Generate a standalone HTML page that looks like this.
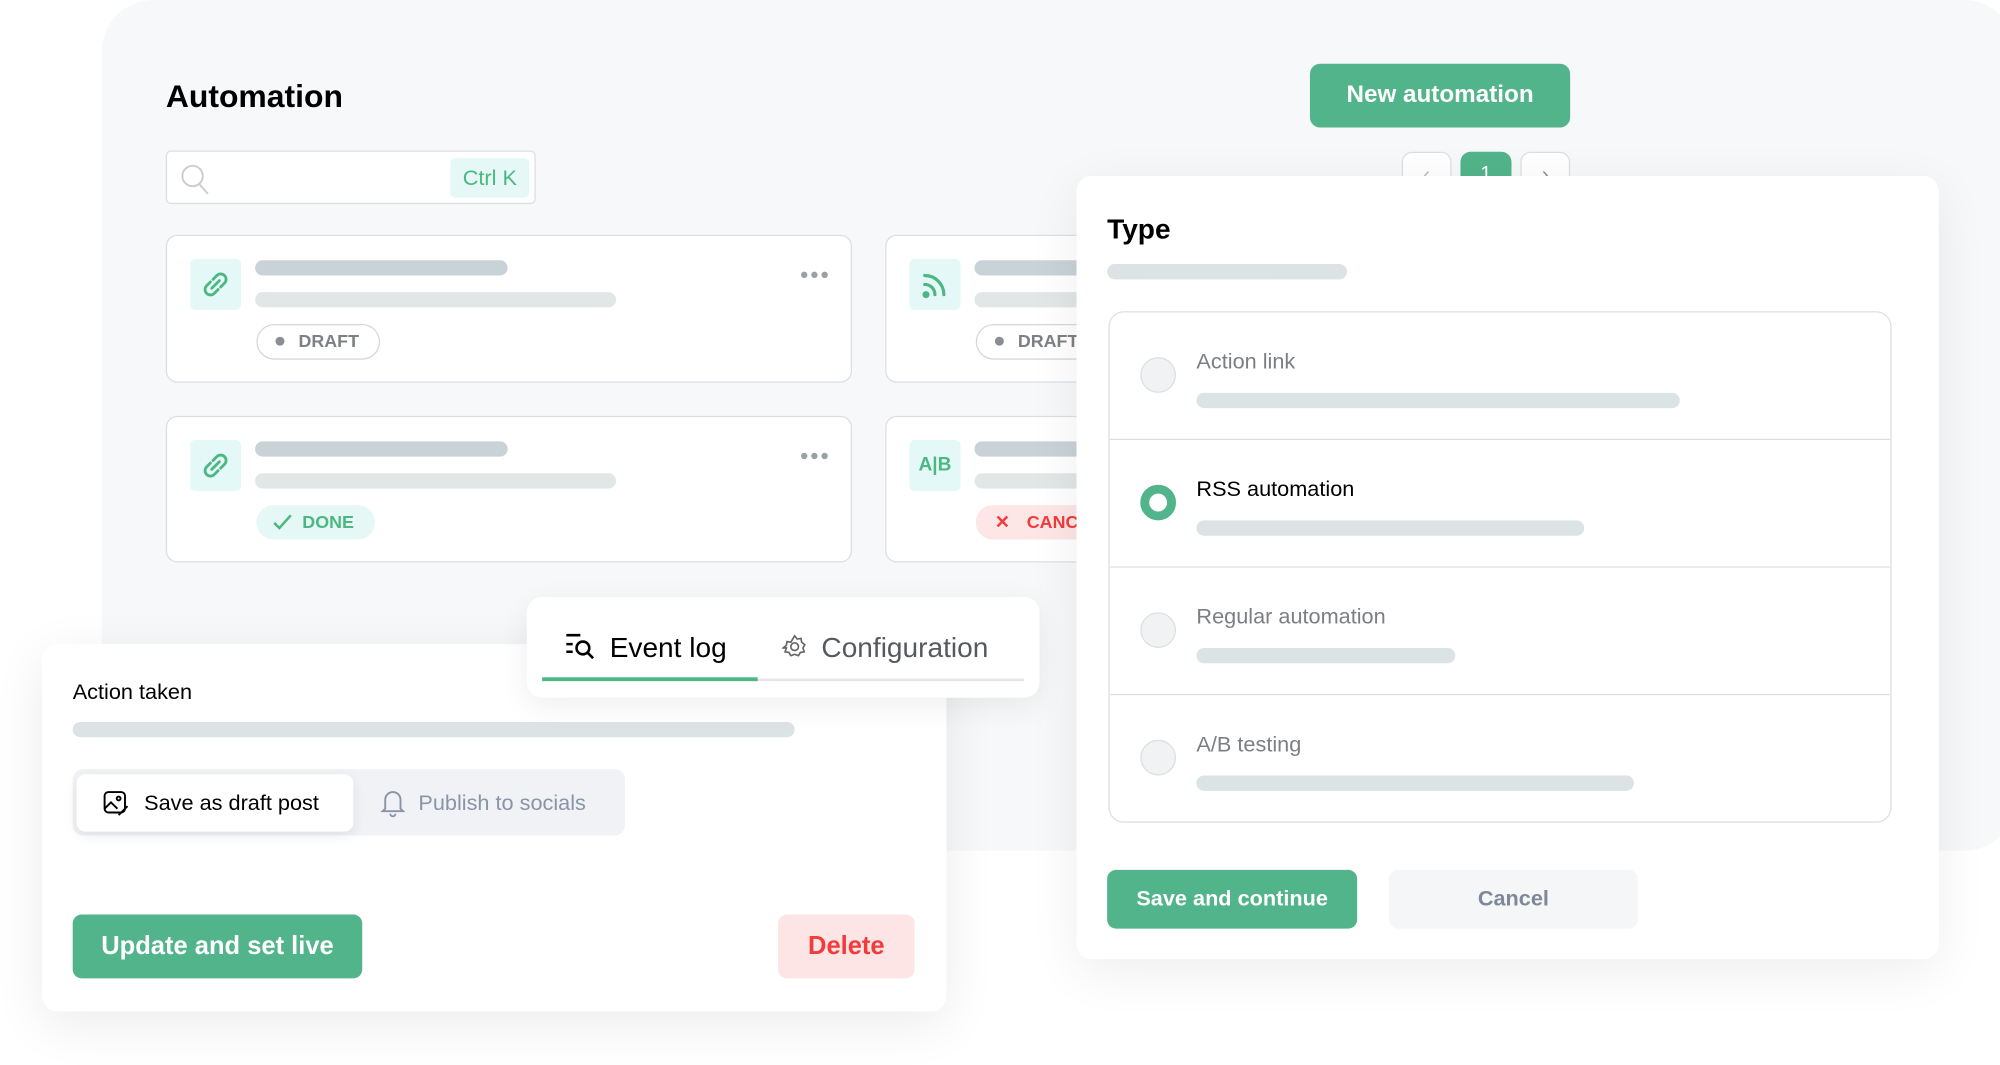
<!DOCTYPE html>
<html><head><meta charset="utf-8"><style>
*{box-sizing:border-box;margin:0;padding:0}
html,body{width:2000px;height:1065px;overflow:hidden;background:#fff;font-family:"Liberation Sans",sans-serif}
#w{position:absolute;left:0;top:0;width:1568px;height:835px;transform:scale(1.27551);transform-origin:0 0}
.a{position:absolute}
.bar{position:absolute;border-radius:7px;height:12px}
.card{position:absolute;background:#fff;border:1.5px solid #dcdfe2;border-radius:9px}
.ic{position:absolute;left:18px;top:18px;width:40px;height:40px;background:#e5f8f8;border-radius:4px}
.dots{position:absolute;left:497px;top:25px;color:#a0a4a8;font-size:10px;letter-spacing:1px}
.dots i{display:inline-block;width:5px;height:5px;border-radius:50%;background:#9aa0a6;margin-right:3px}
.radio{position:absolute;left:24px;width:28px;height:28px;border-radius:50%;background:#f1f2f3;border:1.5px solid #dcdfe1}
.row{position:absolute;left:0;width:100%;height:100px;border-bottom:1.5px solid #dcdfe2}
.row .t{position:absolute;left:68px;top:29px;font-size:17px;color:#7b7f84}
.row .bar{left:68px;top:63px;background:#dce3e4}
</style></head><body><div id="w">
<div class="a" style="left:80px;top:0;width:1500px;height:667px;background:#f7f8fa;border-radius:40px"></div>
<div class="a" style="left:130px;top:62px;font-size:25px;font-weight:bold;color:#000">Automation</div>
<div class="a" style="left:130px;top:118px;width:290px;height:42px;background:#fff;border:1.5px solid #dcdfe2;border-radius:4px">
<svg class="a" style="left:10px;top:9px" width="26" height="26" viewBox="0 0 26 26" fill="none" stroke="#ccc" stroke-width="1.5"><circle cx="10" cy="10" r="8"/><path d="M15 16l7 8"/></svg>
<div class="a" style="left:222px;top:5px;width:62px;height:31px;background:#e5f8f6;border-radius:4px;color:#4cb782;font-size:17px;text-align:center;line-height:31px">Ctrl K</div></div>

<div class="card" style="left:130px;top:184px;width:538px;height:116px">
<div class="ic"><svg width="40" height="40" viewBox="0 0 40 40" fill="none" stroke="#4cb782" stroke-width="2.2" stroke-linecap="round"><path d="M18 16l3-3a4 4 0 016 6l-3 3M22 24l-3 3a4 4 0 01-6-6l3-3M17 23l6-6"/></svg></div>
<div class="bar" style="left:69px;top:19px;width:198px;background:#c9d3d7"></div>
<div class="bar" style="left:69px;top:44px;width:283px;background:#e1e6e6"></div>
<div class="a" style="left:70px;top:69px;width:97px;height:28px;border:1.5px solid #d5d8da;border-radius:14px;font-size:14px;font-weight:bold;color:#7d8185;line-height:25px;padding-left:32px">DRAFT<i class="a" style="left:14px;top:9px;width:7px;height:7px;border-radius:50%;background:#8a8e92"></i></div>
<div class="dots"><i></i><i></i><i></i></div></div>

<div class="card" style="left:130px;top:326px;width:538px;height:115px">
<div class="ic"><svg width="40" height="40" viewBox="0 0 40 40" fill="none" stroke="#4cb782" stroke-width="2.2" stroke-linecap="round"><path d="M18 16l3-3a4 4 0 016 6l-3 3M22 24l-3 3a4 4 0 01-6-6l3-3M17 23l6-6"/></svg></div>
<div class="bar" style="left:69px;top:19px;width:198px;background:#c9d3d7"></div>
<div class="bar" style="left:69px;top:44px;width:283px;background:#e1e6e6"></div>
<div class="a" style="left:70px;top:69px;width:93px;height:27px;background:#e5f8f6;border-radius:14px;font-size:14px;font-weight:bold;color:#4cb782;line-height:27px;padding-left:36px">DONE<svg class="a" style="left:13px;top:7px" width="15" height="13" viewBox="0 0 15 13" fill="none" stroke="#4cb782" stroke-width="2"><path d="M1 7l4 4 9-10"/></svg></div>
<div class="dots"><i></i><i></i><i></i></div></div>

<div class="card" style="left:694px;top:184px;width:400px;height:116px">
<div class="ic"><svg width="40" height="40" viewBox="0 0 40 40" fill="none" stroke="#4cb782" stroke-width="2.5" stroke-linecap="round"><path d="M12 13a15 15 0 0115 15M12 20a8 8 0 018 8"/><circle cx="13" cy="28" r="1.5" fill="#4cb782"/></svg></div>
<div class="bar" style="left:69px;top:19px;width:198px;background:#c9d3d7"></div>
<div class="bar" style="left:69px;top:44px;width:283px;background:#e1e6e6"></div>
<div class="a" style="left:70px;top:69px;width:97px;height:28px;border:1.5px solid #d5d8da;border-radius:14px;font-size:14px;font-weight:bold;color:#7d8185;line-height:25px;padding-left:32px">DRAFT<i class="a" style="left:14px;top:9px;width:7px;height:7px;border-radius:50%;background:#8a8e92"></i></div></div>
<div class="card" style="left:694px;top:326px;width:400px;height:115px">
<div class="ic" style="color:#4cb782;font-weight:bold;font-size:15px;text-align:center;line-height:40px">A|B</div>
<div class="bar" style="left:69px;top:19px;width:198px;background:#c9d3d7"></div>
<div class="bar" style="left:69px;top:44px;width:283px;background:#e1e6e6"></div>
<div class="a" style="left:70px;top:69px;width:120px;height:27px;background:#fde6e6;border-radius:14px;font-size:14px;font-weight:bold;color:#f23b3b;line-height:27px;padding-left:40px">CANCELLED<span class="a" style="left:15px;top:0">✕</span></div></div>

<div class="a" style="left:1027px;top:50px;width:204px;height:50px;background:#52b48a;border-radius:8px;color:#fff;font-weight:bold;font-size:19px;text-align:center;line-height:50px">New automation</div>
<div class="a" style="left:1099px;top:119px;width:39px;height:40px;border:1.5px solid #dcdfe2;border-radius:8px;background:#fff;color:#bbb;text-align:center;line-height:36px;font-size:16px">‹</div>
<div class="a" style="left:1145px;top:119px;width:40px;height:40px;border-radius:8px;background:#52b48a;color:#fff;text-align:center;line-height:36px;font-size:16px">1</div>
<div class="a" style="left:1192px;top:119px;width:39px;height:40px;border:1.5px solid #dcdfe2;border-radius:8px;background:#fff;color:#888;text-align:center;line-height:36px;font-size:16px">›</div>

<div class="a" style="left:844px;top:138px;width:676px;height:614px;background:#fff;border-radius:12px;box-shadow:0 10px 40px rgba(0,0,0,.07)">
<div class="a" style="left:24px;top:29px;font-size:22px;font-weight:bold;color:#000">Type</div>
<div class="bar" style="left:24px;top:69px;width:188px;background:#dce3e4"></div>
<div class="a" style="left:25px;top:106px;width:614px;height:401px;border:1.5px solid #dcdfe2;border-radius:12px;overflow:hidden">
<div class="row" style="top:0"><div class="radio" style="top:35px"></div><div class="t">Action link</div><div class="bar" style="width:379px"></div></div>
<div class="row" style="top:100px"><div class="radio" style="top:35px;background:#fff;border:7px solid #52b48a"></div><div class="t" style="color:#000">RSS automation</div><div class="bar" style="width:304px"></div></div>
<div class="row" style="top:200px"><div class="radio" style="top:35px"></div><div class="t">Regular automation</div><div class="bar" style="width:203px"></div></div>
<div class="row" style="top:300px;border:0"><div class="radio" style="top:35px"></div><div class="t">A/B testing</div><div class="bar" style="width:343px"></div></div></div>
<div class="a" style="left:24px;top:544px;width:196px;height:46px;background:#52b48a;border-radius:7px;color:#fff;font-weight:bold;font-size:17px;text-align:center;line-height:46px">Save and continue</div>
<div class="a" style="left:245px;top:544px;width:195px;height:46px;background:#f4f6f8;border-radius:7px;color:#7f8898;font-weight:bold;font-size:17px;text-align:center;line-height:46px">Cancel</div></div>

<div class="a" style="left:33px;top:505px;width:709px;height:288px;background:#fff;border-radius:12px;box-shadow:0 10px 40px rgba(0,0,0,.08)">
<div class="a" style="left:24px;top:28px;font-size:17px;color:#000">Action taken</div>
<div class="bar" style="left:24px;top:61px;width:566px;background:#dce3e4"></div>
<div class="a" style="left:24px;top:98px;width:433px;height:52px;background:#f0f2f5;border-radius:8px">
<div class="a" style="left:3px;top:4px;width:217px;height:45px;background:#fff;border-radius:7px;box-shadow:0 3px 10px rgba(0,0,0,.08)">
<svg class="a" style="left:20px;top:12px" width="22" height="22" viewBox="0 0 22 22" fill="none" stroke="#000" stroke-width="1.5"><rect x="2" y="2" width="16" height="16" rx="3"/><circle cx="13" cy="7" r="1.5"/><path d="M2 15l5-5 5 5M13 20l7-7"/></svg>
<div class="a" style="left:53px;top:13px;font-size:17px;color:#000">Save as draft post</div></div>
<svg class="a" style="left:240px;top:14px" width="22" height="24" viewBox="0 0 22 24" fill="none" stroke="#8a94a8" stroke-width="1.5"><path d="M5 17V10a6 6 0 0112 0v7l2 2H3zM9 21a2 2 0 004 0"/></svg>
<div class="a" style="left:271px;top:17px;font-size:17px;color:#8a94a8">Publish to socials</div></div>
<div class="a" style="left:24px;top:212px;width:227px;height:50px;background:#52b48a;border-radius:7px;color:#fff;font-weight:bold;font-size:20px;text-align:center;line-height:50px">Update and set live</div>
<div class="a" style="left:577px;top:212px;width:107px;height:50px;background:#fde5e5;border-radius:7px;color:#f23b3b;font-weight:bold;font-size:20px;text-align:center;line-height:50px">Delete</div></div>

<div class="a" style="left:413px;top:468px;width:402px;height:79px;background:#fff;border-radius:12px;box-shadow:0 6px 24px rgba(0,0,0,.07)">
<svg class="a" style="left:30px;top:28px" width="24" height="22" viewBox="0 0 24 22" fill="none" stroke="#000" stroke-width="2"><path d="M1 2h11M1 9h5M1 15h5"/><circle cx="14" cy="12" r="5"/><path d="M18 16l4 4"/></svg>
<div class="a" style="left:65px;top:27px;font-size:22px;color:#000">Event log</div>
<svg class="a" style="left:200px;top:29px" width="20" height="20" viewBox="0 0 20 20" fill="none" stroke="#666" stroke-width="1.3"><circle cx="10" cy="10" r="3"/><path d="M10 1.5l2 2.5 3-.5.5 3 2.5 2-1.5 2.5 1 3-3 .5-1.5 2.5-3-1-3 1-1.5-2.5-3-.5 1-3L1 11l2.5-2 .5-3 3 .5z"/></svg>
<div class="a" style="left:231px;top:27px;font-size:22px;color:#555a60">Configuration</div>
<div class="a" style="left:12px;top:64px;width:378px;height:2px;background:#e4e6e8"></div>
<div class="a" style="left:12px;top:63px;width:169px;height:3px;background:#4cb782"></div></div>
</div></body></html>
